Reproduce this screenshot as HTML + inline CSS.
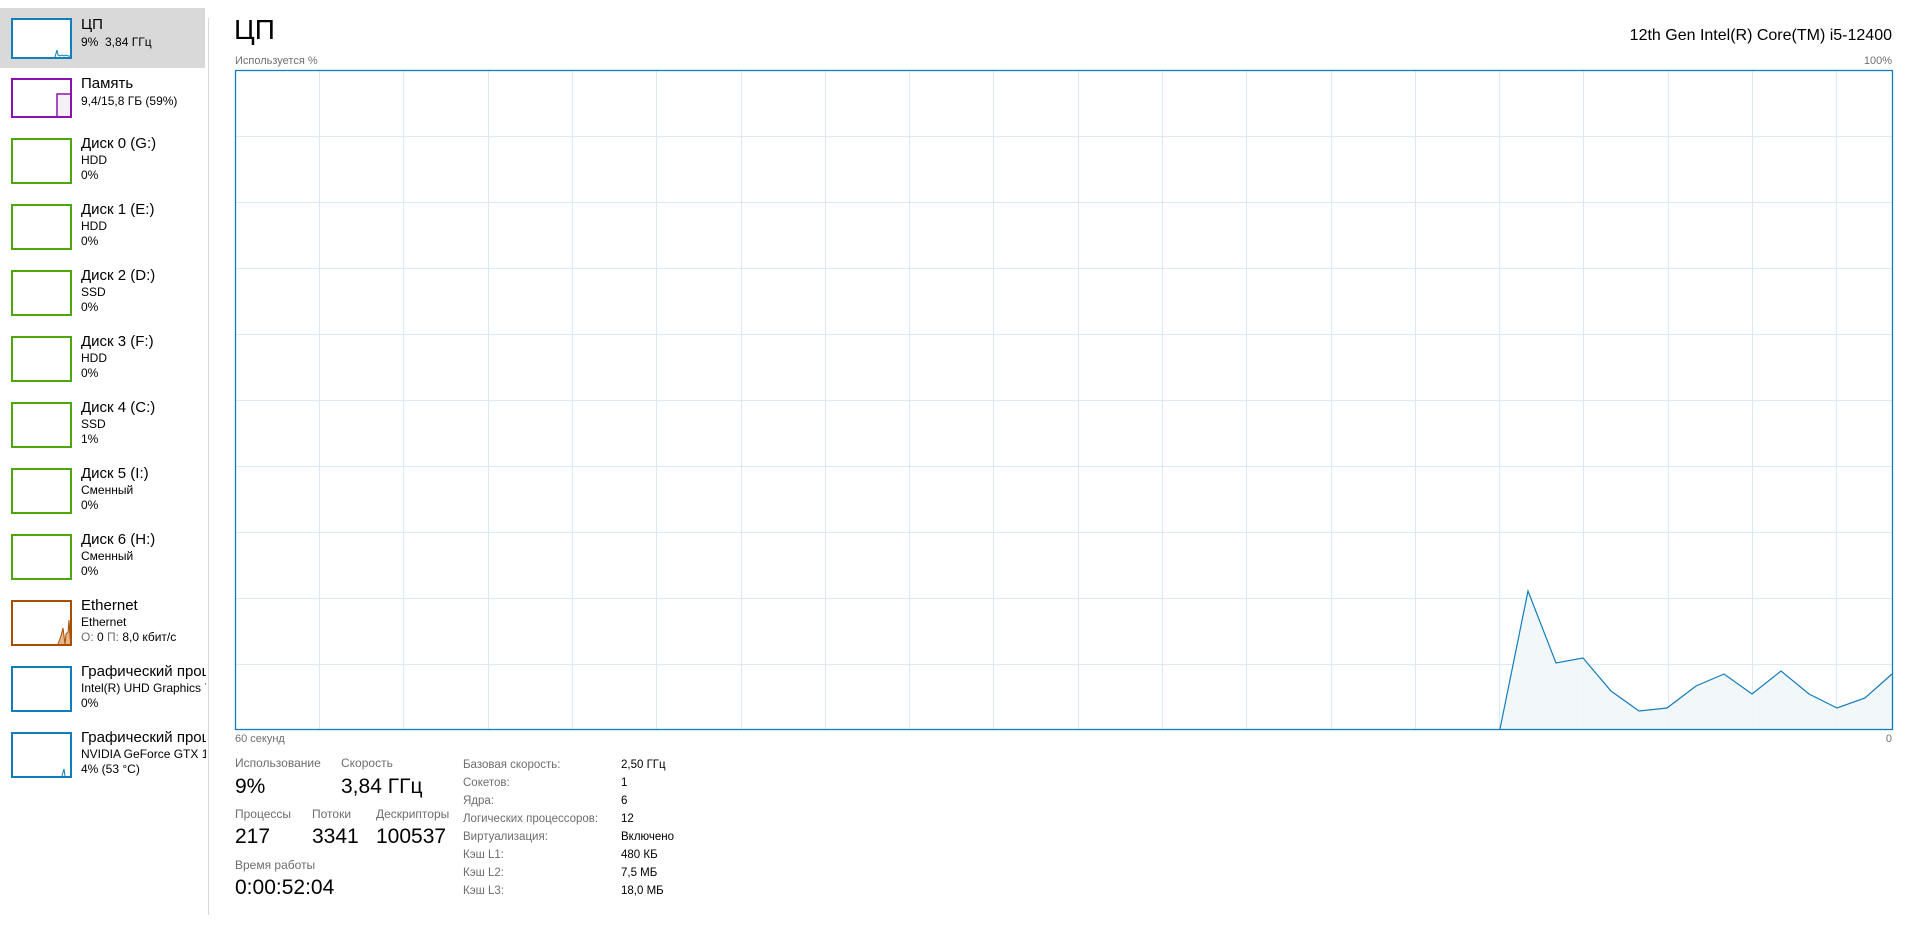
<!DOCTYPE html>
<html><head><meta charset="utf-8">
<style>
*{margin:0;padding:0;box-sizing:border-box}
body{width:1917px;height:926px;background:#fff;position:relative;overflow:hidden;font-family:"Liberation Sans","DejaVu Sans",sans-serif;color:#000}
.a{position:absolute;white-space:nowrap}
.side{position:absolute;left:0;top:0;width:206px;height:926px;overflow:hidden}
.sel{position:absolute;left:0;top:8px;width:205px;height:60px;background:#d9d9d9}
.box{position:absolute;left:11px;width:61px;border:2px solid;background:#fff}
.t{font-size:15px}
.s{font-size:12px}
.g{color:#6d6d6d}
</style></head><body>
<div class="side">
<div class="sel"></div>
<!-- CPU -->
<div class="box" style="top:18px;height:41px;border-color:#117dbb"></div>
<svg class="a" style="left:0;top:0" width="206" height="926">
<polyline points="55,57 57,50 58,55 60,56 62,55 64,56 66,55 68,56 70,56" fill="none" stroke="#117dbb" stroke-width="1"/>
<polyline points="57,117 57,94 71,94" fill="none" stroke="#8b12ae" stroke-width="1.5"/>
<rect x="58" y="95" width="12" height="21" fill="#f4f0f6"/>
<polyline points="58,644 61,636 63,628 64,636 65,644 66,634 68,632 69,620 70,636 71,644" fill="#e7b58a" stroke="#a74f01" stroke-width="1"/>
<polyline points="62,776 64,769 65,776" fill="none" stroke="#117dbb" stroke-width="1"/>
</svg>
<div class="a t" style="left:81px;top:16px">ЦП</div>
<div class="a s" style="left:81px;top:35px">9%&nbsp; 3,84 ГГц</div>
<div class="box" style="top:78px;height:40px;border-color:#8b12ae;background:transparent"></div>
<div class="a t" style="left:81px;top:75px">Память</div>
<div class="a s" style="left:81px;top:94px">9,4/15,8 ГБ (59%)</div>

<div class="box" style="top:138px;height:46px;border-color:#4da60c"></div>
<div class="a t" style="left:81px;top:135px">Диск 0 (G:)</div>
<div class="a s" style="left:81px;top:153px">HDD</div>
<div class="a s" style="left:81px;top:168px">0%</div>

<div class="box" style="top:204px;height:46px;border-color:#4da60c"></div>
<div class="a t" style="left:81px;top:201px">Диск 1 (E:)</div>
<div class="a s" style="left:81px;top:219px">HDD</div>
<div class="a s" style="left:81px;top:234px">0%</div>

<div class="box" style="top:270px;height:46px;border-color:#4da60c"></div>
<div class="a t" style="left:81px;top:267px">Диск 2 (D:)</div>
<div class="a s" style="left:81px;top:285px">SSD</div>
<div class="a s" style="left:81px;top:300px">0%</div>

<div class="box" style="top:336px;height:46px;border-color:#4da60c"></div>
<div class="a t" style="left:81px;top:333px">Диск 3 (F:)</div>
<div class="a s" style="left:81px;top:351px">HDD</div>
<div class="a s" style="left:81px;top:366px">0%</div>

<div class="box" style="top:402px;height:46px;border-color:#4da60c"></div>
<div class="a t" style="left:81px;top:399px">Диск 4 (C:)</div>
<div class="a s" style="left:81px;top:417px">SSD</div>
<div class="a s" style="left:81px;top:432px">1%</div>

<div class="box" style="top:468px;height:46px;border-color:#4da60c"></div>
<div class="a t" style="left:81px;top:465px">Диск 5 (I:)</div>
<div class="a s" style="left:81px;top:483px">Сменный</div>
<div class="a s" style="left:81px;top:498px">0%</div>

<div class="box" style="top:534px;height:46px;border-color:#4da60c"></div>
<div class="a t" style="left:81px;top:531px">Диск 6 (H:)</div>
<div class="a s" style="left:81px;top:549px">Сменный</div>
<div class="a s" style="left:81px;top:564px">0%</div>

<div class="box" style="top:600px;height:46px;border-color:#a74f01;background:transparent"></div>
<div class="a t" style="left:81px;top:597px">Ethernet</div>
<div class="a s" style="left:81px;top:615px">Ethernet</div>
<div class="a s" style="left:81px;top:630px"><span class="g">О:</span> 0 <span class="g">П:</span> 8,0 кбит/с</div>

<div class="box" style="top:666px;height:46px;border-color:#117dbb"></div>
<div class="a t" style="left:81px;top:663px">Графический процессор 0</div>
<div class="a s" style="left:81px;top:681px">Intel(R) UHD Graphics 730</div>
<div class="a s" style="left:81px;top:696px">0%</div>

<div class="box" style="top:732px;height:46px;border-color:#117dbb;background:transparent"></div>
<div class="a t" style="left:81px;top:729px">Графический процессор 1</div>
<div class="a s" style="left:81px;top:747px">NVIDIA GeForce GTX 1660</div>
<div class="a s" style="left:81px;top:762px">4% (53 °C)</div>
</div>
<div class="a" style="left:208px;top:18px;width:1px;height:897px;background:#d9d9d9"></div>

<div class="a" style="left:234px;top:14px;font-size:28px">ЦП</div>
<div class="a" style="right:25px;top:27px;font-size:16px">12th Gen Intel(R) Core(TM) i5-12400</div>
<div class="a" style="left:235px;top:55px;font-size:11px;color:#707070">Используется %</div>
<div class="a" style="right:25px;top:55px;font-size:11px;color:#707070">100%</div>

<svg class="a" style="left:0;top:0" width="1917" height="760">
<g stroke="#d9eaf4" stroke-width="1">
<line x1="236" y1="136.5" x2="1892" y2="136.5"/><line x1="236" y1="202.5" x2="1892" y2="202.5"/>
<line x1="236" y1="268.5" x2="1892" y2="268.5"/><line x1="236" y1="334.5" x2="1892" y2="334.5"/>
<line x1="236" y1="400.5" x2="1892" y2="400.5"/><line x1="236" y1="466.5" x2="1892" y2="466.5"/>
<line x1="236" y1="532.5" x2="1892" y2="532.5"/><line x1="236" y1="598.5" x2="1892" y2="598.5"/>
<line x1="236" y1="664.5" x2="1892" y2="664.5"/>
<line x1="319.5" y1="71" x2="319.5" y2="729"/><line x1="403.5" y1="71" x2="403.5" y2="729"/>
<line x1="488.5" y1="71" x2="488.5" y2="729"/><line x1="572.5" y1="71" x2="572.5" y2="729"/>
<line x1="656.5" y1="71" x2="656.5" y2="729"/><line x1="741.5" y1="71" x2="741.5" y2="729"/>
<line x1="825.5" y1="71" x2="825.5" y2="729"/><line x1="909.5" y1="71" x2="909.5" y2="729"/>
<line x1="993.5" y1="71" x2="993.5" y2="729"/><line x1="1078.5" y1="71" x2="1078.5" y2="729"/>
<line x1="1162.5" y1="71" x2="1162.5" y2="729"/><line x1="1246.5" y1="71" x2="1246.5" y2="729"/>
<line x1="1331.5" y1="71" x2="1331.5" y2="729"/><line x1="1415.5" y1="71" x2="1415.5" y2="729"/>
<line x1="1499.5" y1="71" x2="1499.5" y2="729"/><line x1="1583.5" y1="71" x2="1583.5" y2="729"/>
<line x1="1668.5" y1="71" x2="1668.5" y2="729"/><line x1="1752.5" y1="71" x2="1752.5" y2="729"/>
<line x1="1836.5" y1="71" x2="1836.5" y2="729"/>
</g>
<polygon points="1500,729 1528,591 1556,663 1583,658 1611,691 1639,711 1667,708 1696,686 1724,674 1752,694 1781,671 1809,694 1837,708 1865,698 1892,674 1892,729" fill="#f1f6fa" fill-opacity="0.9"/>
<polyline points="1500,729 1528,591 1556,663 1583,658 1611,691 1639,711 1667,708 1696,686 1724,674 1752,694 1781,671 1809,694 1837,708 1865,698 1892,674" fill="none" stroke="#117dbb" stroke-width="1.2"/>
<rect x="235.5" y="70.5" width="1657" height="659" fill="none" stroke="#117dbb" stroke-width="1.3"/>
</svg>
<div class="a" style="left:235px;top:733px;font-size:11px;color:#707070">60 секунд</div>
<div class="a" style="right:25px;top:733px;font-size:11px;color:#707070">0</div>

<div class="a s g" style="left:235px;top:756px">Использование</div>
<div class="a s g" style="left:341px;top:756px">Скорость</div>
<div class="a" style="left:235px;top:775px;font-size:21px">9%</div>
<div class="a" style="left:341px;top:775px;font-size:21px">3,84 ГГц</div>
<div class="a s g" style="left:235px;top:807px">Процессы</div>
<div class="a s g" style="left:312px;top:807px">Потоки</div>
<div class="a s g" style="left:376px;top:807px">Дескрипторы</div>
<div class="a" style="left:235px;top:825px;font-size:21px">217</div>
<div class="a" style="left:312px;top:825px;font-size:21px">3341</div>
<div class="a" style="left:376px;top:825px;font-size:21px">100537</div>
<div class="a s g" style="left:235px;top:858px">Время работы</div>
<div class="a" style="left:235px;top:876px;font-size:21px">0:00:52:04</div>

<div class="a" style="left:463px;top:756px;font-size:11.5px;color:#6d6d6d;line-height:18px">Базовая скорость:<br>Сокетов:<br>Ядра:<br>Логических процессоров:<br>Виртуализация:<br>Кэш L1:<br>Кэш L2:<br>Кэш L3:</div>
<div class="a" style="left:621px;top:756px;font-size:11.5px;line-height:18px">2,50 ГГц<br>1<br>6<br>12<br>Включено<br>480 КБ<br>7,5 МБ<br>18,0 МБ</div>
</body></html>
